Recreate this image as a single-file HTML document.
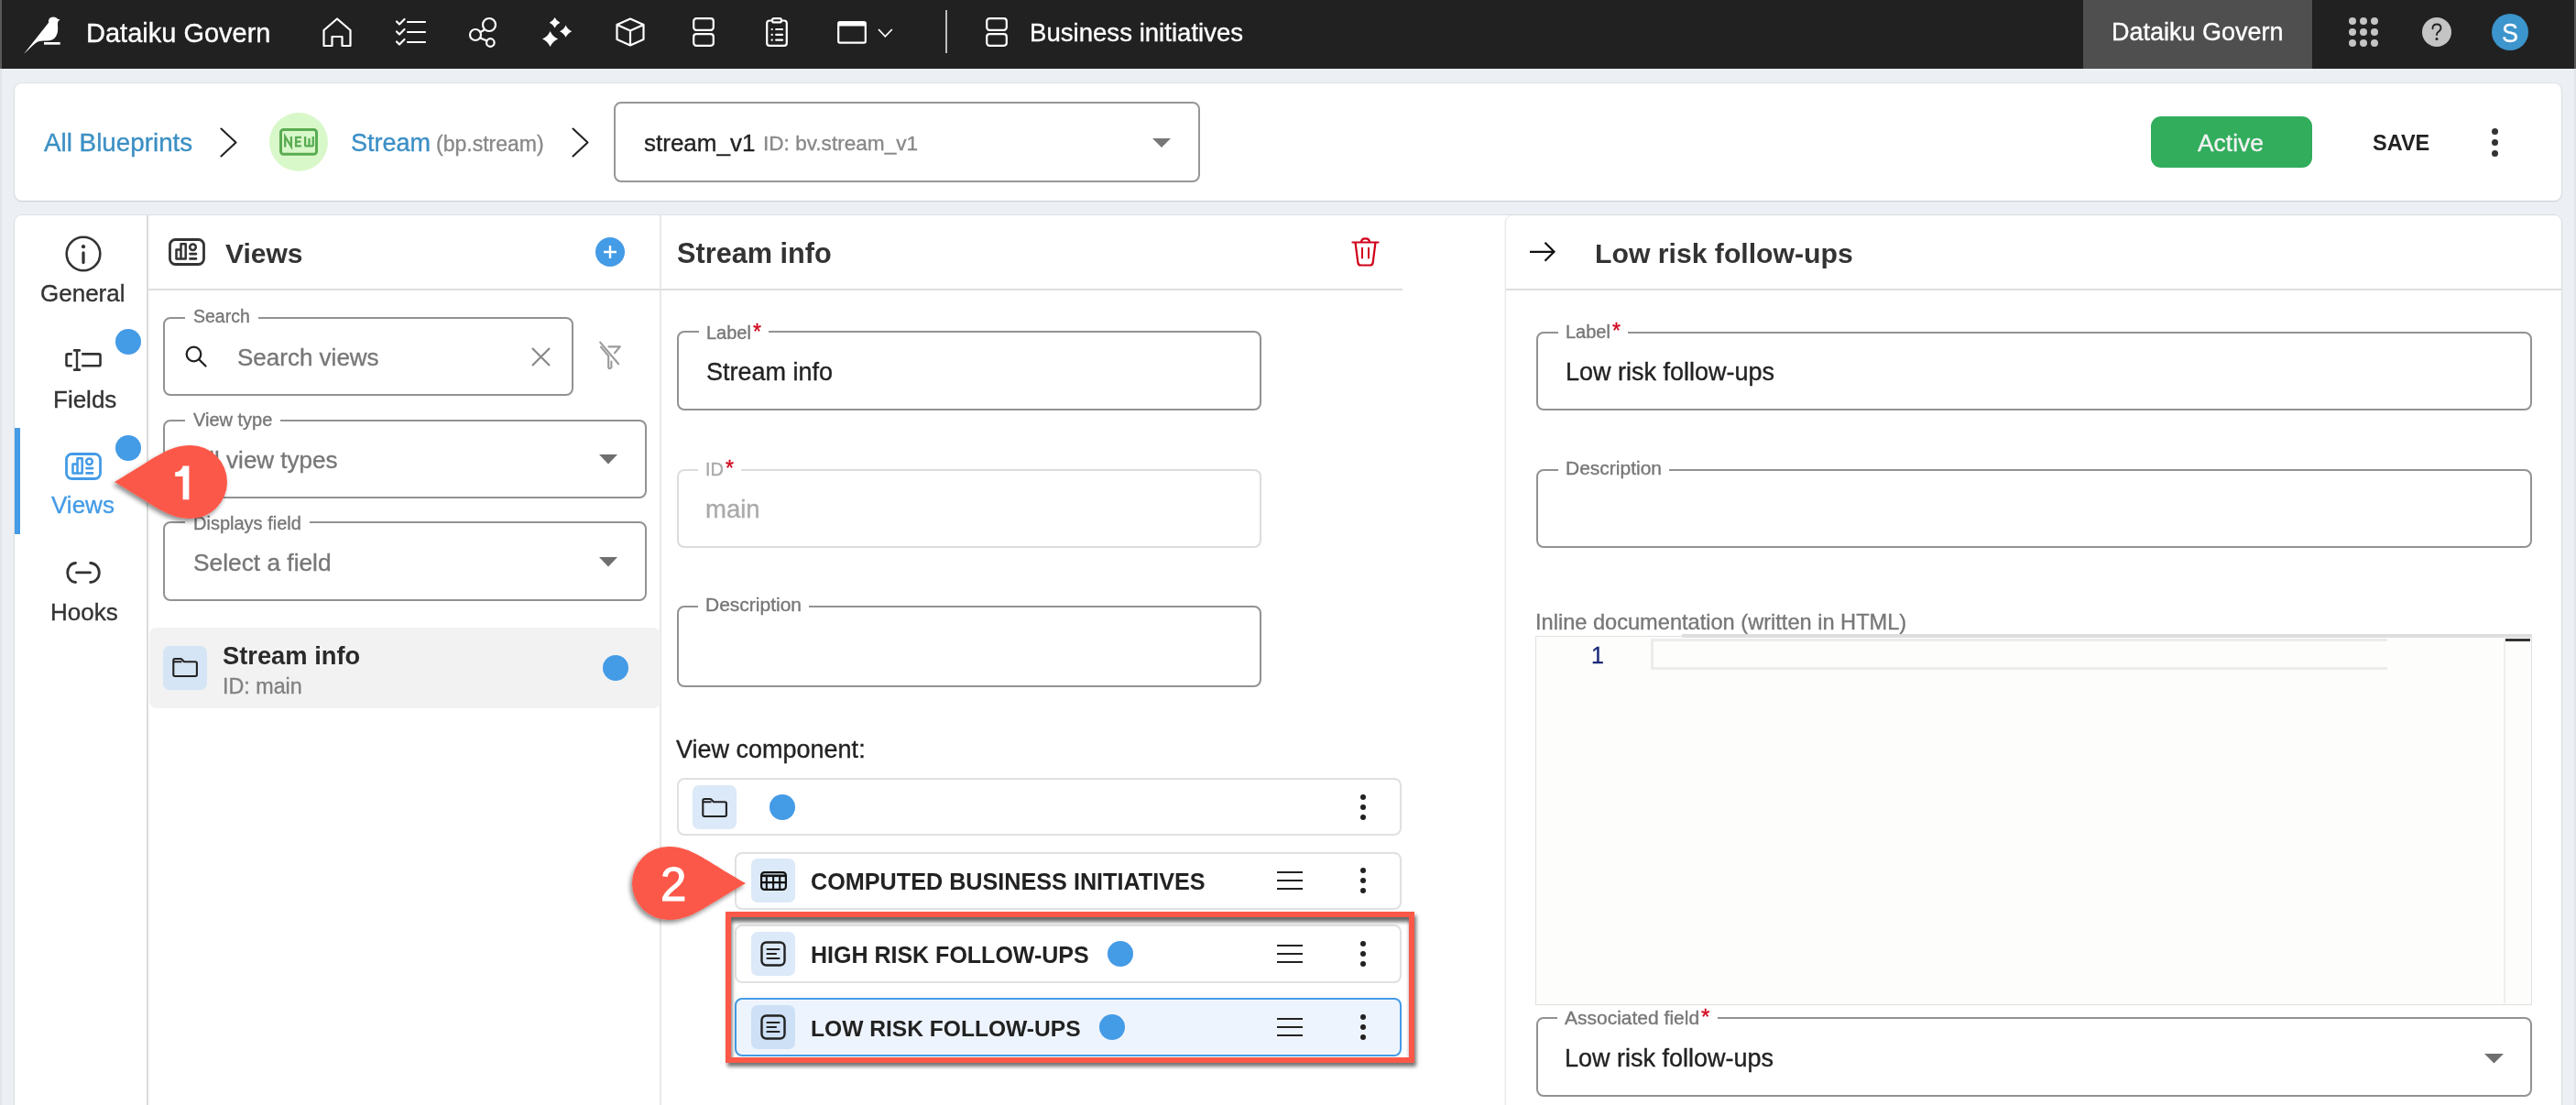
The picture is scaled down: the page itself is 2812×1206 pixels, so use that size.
<!DOCTYPE html>
<html><head><meta charset="utf-8"><style>
*{box-sizing:border-box;margin:0;padding:0}
html,body{width:2812px;height:1206px;overflow:hidden;background:#eceff3;font-family:"Liberation Sans",sans-serif;color:#222}
.a{position:absolute}
svg{position:absolute;overflow:visible}
.t{position:absolute;white-space:nowrap;line-height:1;will-change:transform}
</style></head><body>
<div class="a" style="left:0px;top:0px;width:2812px;height:75px;background:#212121"></div>
<div class="a" style="left:0px;top:0px;width:2px;height:75px;background:#5a5a5a"></div>
<div class="a" style="left:0px;top:75px;width:2px;height:1131px;background:#e3e5e9"></div>
<div class="a" style="left:2810px;top:0px;width:2px;height:75px;background:#5a5a5a"></div>
<div class="a" style="left:2810px;top:75px;width:2px;height:1131px;background:#e3e5e9"></div>
<svg style="left:0px;top:0px" width="120" height="75" viewBox="0 0 120 75"><path fill="#fff" d="M26.1 58.7 L53.2 24.6 C52.3 21.5 54.5 18.6 58.2 18.6 C60.6 18.6 62 19.6 62.9 20.8 L65.4 21.2 L63.2 23.8 C62.6 27.5 63.5 30 63 34 C62.3 39.5 59 43.6 54 44.2 C50 44.5 45 44.2 42 45.2 C37 47.5 30.5 55 26.1 58.7 Z"/><rect x="48" y="46" width="17.7" height="2.7" fill="#fff"/></svg>
<div class="t" style="left:94px;top:21.8px;font-size:29px;color:#fff;font-weight:normal;-webkit-text-stroke:0.35px #fff;">Dataiku Govern</div>
<svg style="left:352px;top:19px" width="32" height="32" viewBox="0 0 32 32"><path stroke="#fff" stroke-width="2.2" fill="none" stroke-linecap="round" stroke-linejoin="round" d="M1.5 31 V14 L16 1.5 L30.5 14 V31 H21.5 V21 H10.5 V31 Z"/></svg>
<svg style="left:432px;top:19px" width="32" height="32" viewBox="0 0 32 32"><path stroke="#fff" stroke-width="2.2" fill="none" stroke-linecap="round" stroke-linejoin="round" d="M1 4.5 L4 7.5 L9.5 2 M1 15.5 L4 18.5 L9.5 13 M1 26.5 L4 29.5 L9.5 24 M13 5 H32 M13 16 H32 M13 27 H32"/></svg>
<svg style="left:512px;top:19px" width="32" height="32" viewBox="0 0 32 32"><circle stroke="#fff" stroke-width="2.2" fill="none" stroke-linecap="round" stroke-linejoin="round" cx="22" cy="8" r="7"/><circle stroke="#fff" stroke-width="2.2" fill="none" stroke-linecap="round" stroke-linejoin="round" cx="7" cy="19" r="6"/><circle stroke="#fff" stroke-width="2.2" fill="none" stroke-linecap="round" stroke-linejoin="round" cx="23.3" cy="27.5" r="4.3"/><path stroke="#fff" stroke-width="2.2" fill="none" stroke-linecap="round" stroke-linejoin="round" d="M12.5 16 L16 14 M12.2 22.5 L19.5 25.5"/></svg>
<svg style="left:592px;top:19px" width="32" height="32" viewBox="0 0 32 32"><path fill="#fff" d="M8.6 14.9 Q11.18 20.92 17.2 23.5 Q11.18 26.08 8.6 32.1 Q6.02 26.08 0.0 23.5 Q6.02 20.92 8.6 14.9 Z M13.6 -0.09999999999999964 Q15.34 3.96 19.4 5.7 Q15.34 7.44 13.6 11.5 Q11.86 7.44 7.8 5.7 Q11.86 3.96 13.6 -0.09999999999999964 Z M25.6 8.6 Q27.580000000000002 13.219999999999999 32.2 15.2 Q27.580000000000002 17.18 25.6 21.799999999999997 Q23.62 17.18 19.0 15.2 Q23.62 13.219999999999999 25.6 8.6 Z"/></svg>
<svg style="left:672px;top:19px" width="32" height="32" viewBox="0 0 32 32"><path stroke="#fff" stroke-width="2.2" fill="none" stroke-linecap="round" stroke-linejoin="round" d="M16 1.5 L30.5 8 V24 L16 30.5 L1.5 24 V8 Z M1.5 8 L16 14.5 L30.5 8 M16 14.5 V30.5"/></svg>
<svg style="left:756px;top:19px" width="24" height="32" viewBox="0 0 24 32"><rect stroke="#fff" stroke-width="2.2" fill="none" stroke-linecap="round" stroke-linejoin="round" x="1.2" y="1.2" width="21.6" height="12.6" rx="3"/><rect stroke="#fff" stroke-width="2.2" fill="none" stroke-linecap="round" stroke-linejoin="round" x="1.2" y="18.2" width="21.6" height="12.6" rx="3"/></svg>
<svg style="left:836px;top:19px" width="24" height="32" viewBox="0 0 24 32"><path stroke="#fff" stroke-width="2.2" fill="none" stroke-linecap="round" stroke-linejoin="round" d="M6.5 3.5 H4 Q1.2 3.5 1.2 6.3 V28 Q1.2 30.8 4 30.8 H20 Q22.8 30.8 22.8 28 V6.3 Q22.8 3.5 20 3.5 H17.5"/><rect stroke="#fff" stroke-width="2.2" fill="none" stroke-linecap="round" stroke-linejoin="round" x="7" y="1.2" width="10" height="4.2" rx="2"/><path stroke="#fff" stroke-width="2.2" stroke-linecap="round" d="M6.6 13 H6.8 M6.6 18.9 H6.8 M6.6 24.7 H6.8 M11.2 13 H18 M11.2 18.9 H18 M11.2 24.7 H18"/></svg>
<svg style="left:914px;top:23px" width="32" height="25" viewBox="0 0 32 25"><rect stroke="#fff" stroke-width="2.2" fill="none" stroke-linecap="round" stroke-linejoin="round" x="1.2" y="1.2" width="29.6" height="22.4" rx="1.5"/><rect x="1" y="1" width="30" height="4.5" fill="#fff"/></svg>
<svg style="left:958px;top:31px" width="17" height="10" viewBox="0 0 17 10"><path stroke="#fff" stroke-width="1.8" fill="none" d="M1 1 L8.3 8.8 L15.8 1"/></svg>
<div class="a" style="left:1032px;top:11px;width:2px;height:47px;background:#bdbdbd"></div>
<svg style="left:1076px;top:19px" width="24" height="32" viewBox="0 0 24 32"><rect stroke="#fff" stroke-width="2.2" fill="none" stroke-linecap="round" stroke-linejoin="round" x="1.2" y="1.2" width="21.6" height="12.6" rx="3"/><rect stroke="#fff" stroke-width="2.2" fill="none" stroke-linecap="round" stroke-linejoin="round" x="1.2" y="18.2" width="21.6" height="12.6" rx="3"/></svg>
<div class="t" style="left:1124px;top:21.6px;font-size:27.6px;color:#fff;font-weight:normal;-webkit-text-stroke:0.35px #fff;">Business initiatives</div>
<div class="a" style="left:2274px;top:0px;width:250px;height:75px;background:#4f4f4f"></div>
<div class="t" style="left:2305px;top:22.2px;font-size:27px;color:#fff;font-weight:normal;-webkit-text-stroke:0.35px #fff;">Dataiku Govern</div>
<svg style="left:2564px;top:19px" width="32" height="32" viewBox="0 0 32 32"><circle cx="4" cy="4" r="4" fill="#c4c4c4"/><circle cx="4" cy="16" r="4" fill="#c4c4c4"/><circle cx="4" cy="28" r="4" fill="#c4c4c4"/><circle cx="16" cy="4" r="4" fill="#c4c4c4"/><circle cx="16" cy="16" r="4" fill="#c4c4c4"/><circle cx="16" cy="28" r="4" fill="#c4c4c4"/><circle cx="28" cy="4" r="4" fill="#c4c4c4"/><circle cx="28" cy="16" r="4" fill="#c4c4c4"/><circle cx="28" cy="28" r="4" fill="#c4c4c4"/></svg>
<svg style="left:2644px;top:19px" width="32" height="32" viewBox="0 0 32 32"><circle cx="16" cy="16" r="16" fill="#c4c4c4"/><path d="M11.5 12.2 Q11.5 7.5 16 7.5 Q20.5 7.5 20.5 11.6 Q20.5 14.2 17.6 15.8 Q16 16.8 16 19" stroke="#222" stroke-width="1.9" fill="none" stroke-linecap="round"/><circle cx="16" cy="23.5" r="1.5" fill="#222"/></svg>
<div class="a" style="left:2720px;top:15px;width:40px;height:40px;background:#3c95cc;border-radius:50%"></div>
<div class="t" style="left:2730.5px;top:21.4px;font-size:30px;color:#fff;font-weight:normal;transform:scaleX(.9);transform-origin:0 0;-webkit-text-stroke:0.3px #fff">S</div>
<div class="a" style="left:16px;top:91px;width:2780px;height:128px;background:#fff;border-radius:8px;box-shadow:0 0 0 1px rgba(0,0,0,.05),0 1px 2px rgba(0,0,0,.10)"></div>
<div class="t" style="left:48px;top:142.1px;font-size:27.8px;color:#3b8fc4;font-weight:normal;-webkit-text-stroke:0.35px #3b8fc4;">All Blueprints</div>
<svg style="left:240px;top:139px" width="19" height="33" viewBox="0 0 19 33"><path stroke="#222" stroke-width="2.1" fill="none" stroke-linecap="round" stroke-linejoin="round" d="M1.5 1.5 L17.5 16.5 L1.5 31.5"/></svg>
<div class="a" style="left:294px;top:123px;width:64px;height:64px;background:#d9f8ca;border-radius:50%"></div>
<svg style="left:305px;top:140px" width="42" height="30" viewBox="0 0 42 30"><rect x="1.5" y="1.5" width="39" height="26.8" rx="3" stroke="#5aac52" stroke-width="3" fill="none"/><path d="M6.2 20.5 V9 L12.9 20 V9 M24 9.9 H18.1 V19.4 H24 M18.1 14.6 H23.5 M28.1 9 V18 Q28.1 19.4 29.5 19.4 H35.4 Q36.8 19.4 36.8 18 V9 M32.5 11 V19.4" stroke="#5aac52" stroke-width="2.3" fill="none"/></svg>
<div class="t" style="left:383px;top:142.7px;font-size:27px;color:#3b8fc6;font-weight:normal;-webkit-text-stroke:0.35px #3b8fc6;">Stream</div>
<div class="t" style="left:476px;top:146.1px;font-size:23px;color:#888;font-weight:normal;-webkit-text-stroke:0.35px #888;">(bp.stream)</div>
<svg style="left:624px;top:139px" width="19" height="33" viewBox="0 0 19 33"><path stroke="#222" stroke-width="2.1" fill="none" stroke-linecap="round" stroke-linejoin="round" d="M1.5 1.5 L17.5 16.5 L1.5 31.5"/></svg>
<div class="a" style="left:670px;top:111px;width:640px;height:88px;border:2px solid #979797;border-radius:8px"></div>
<div class="t" style="left:703px;top:142.7px;font-size:26px;color:#222;font-weight:normal;-webkit-text-stroke:0.35px #222;">stream_v1</div>
<div class="t" style="left:833px;top:145.9px;font-size:22.6px;color:#888;font-weight:normal;-webkit-text-stroke:0.35px #888;">ID: bv.stream_v1</div>
<svg style="left:1258px;top:151px" width="20" height="10" viewBox="0 0 20 10"><path d="M0 0 H20 L10 10 Z" fill="#777"/></svg>
<div class="a" style="left:2348px;top:127px;width:176px;height:56px;background:#31ad5c;border-radius:11px"></div>
<div class="t" style="left:2399px;top:142.7px;font-size:26.4px;color:#f2f2f2;font-weight:normal;-webkit-text-stroke:0.35px #f2f2f2;">Active</div>
<div class="t" style="left:2590px;top:145.1px;font-size:23.5px;color:#222;font-weight:bold;">SAVE</div>
<div class="a" style="left:2720px;top:139.5px;width:7px;height:7px;background:#333;border-radius:50%"></div>
<div class="a" style="left:2720px;top:151.5px;width:7px;height:7px;background:#333;border-radius:50%"></div>
<div class="a" style="left:2720px;top:164.0px;width:7px;height:7px;background:#333;border-radius:50%"></div>
<div class="a" style="left:16px;top:235px;width:2780px;height:1100px;background:#fff;border-radius:8px;box-shadow:0 0 0 1px rgba(0,0,0,.05),0 1px 2px rgba(0,0,0,.10)"></div>
<div class="a" style="left:160px;top:235px;width:2px;height:1000px;background:#dcdcdc"></div>
<svg style="left:71px;top:257px" width="40" height="40" viewBox="0 0 40 40"><circle cx="20" cy="20" r="18.3" stroke="#333" stroke-width="2.6" fill="none"/><circle cx="20" cy="12.2" r="2.1" fill="#333"/><path d="M20 18.8 V29.6" stroke="#333" stroke-width="3.2" stroke-linecap="round"/></svg>
<div class="t" style="left:44.3px;top:306.6px;font-size:26px;color:#333;font-weight:normal;-webkit-text-stroke:0.35px #333;">General</div>
<div class="a" style="left:126px;top:359px;width:28px;height:28px;background:#449be6;border-radius:50%"></div>
<svg style="left:71px;top:381px" width="40" height="24" viewBox="0 0 40 24"><path d="M7.8 5.4 H3 Q1.5 5.4 1.5 6.9 V16.8 Q1.5 18.3 3 18.3 H7.8 M18.2 5.4 H37 Q38.5 5.4 38.5 6.9 V16.8 Q38.5 18.3 37 18.3 H18.2" stroke="#333" stroke-width="2.6" fill="none"/><path d="M13 1.4 V22.7" stroke="#333" stroke-width="2.4"/><path d="M10.2 1.4 H15.8 M10.2 22.7 H15.8" stroke="#333" stroke-width="2.8" stroke-linecap="round"/></svg>
<div class="t" style="left:57.5px;top:422.6px;font-size:26px;color:#333;font-weight:normal;-webkit-text-stroke:0.35px #333;">Fields</div>
<div class="a" style="left:16px;top:467px;width:6px;height:116px;background:#449be6"></div>
<div class="a" style="left:126px;top:475px;width:28px;height:28px;background:#449be6;border-radius:50%"></div>
<svg style="left:71px;top:494px" width="40" height="30" viewBox="0 0 40 30"><rect x="1.5" y="1.5" width="37" height="27" rx="6" stroke="#449be6" stroke-width="2.8" fill="none"/><path d="M8.5 22.5 V12.5 H13.5 V6.3 H18.7 V22.5 Z M13.5 12.5 V22.5" stroke="#449be6" stroke-width="2.5" fill="none" stroke-linejoin="round"/><circle cx="26.5" cy="9.7" r="3.3" stroke="#449be6" stroke-width="2.5" fill="none"/><path d="M23.5 17.1 H30 M23.5 22.4 H30" stroke="#449be6" stroke-width="2.7" stroke-linecap="round"/></svg>
<div class="t" style="left:56px;top:538.3px;font-size:26px;color:#449be6;font-weight:normal;-webkit-text-stroke:0.35px #449be6;">Views</div>
<svg style="left:71px;top:612px" width="40" height="26" viewBox="0 0 40 26"><path d="M11.5 2.5 A 8.8 10.5 0 0 0 11.5 23.5 M27.7 2.5 A 9.6 10.5 0 0 1 27.7 23.5 M12.5 12.9 H27.5" stroke="#333" stroke-width="2.8" fill="none" stroke-linecap="round"/></svg>
<div class="t" style="left:54.5px;top:654.7px;font-size:26px;color:#333;font-weight:normal;-webkit-text-stroke:0.35px #333;">Hooks</div>
<div class="a" style="left:720px;top:235px;width:2px;height:1000px;background:#e8e8e8"></div>
<div class="a" style="left:162px;top:315px;width:559px;height:2px;background:#dedede"></div>
<svg style="left:184px;top:260px" width="40" height="30" viewBox="0 0 40 30"><rect x="1.5" y="1.5" width="37" height="27" rx="6" stroke="#333" stroke-width="2.8" fill="none"/><path d="M8.5 22.5 V12.5 H13.5 V6.3 H18.7 V22.5 Z M13.5 12.5 V22.5" stroke="#333" stroke-width="2.5" fill="none" stroke-linejoin="round"/><circle cx="26.5" cy="9.7" r="3.3" stroke="#333" stroke-width="2.5" fill="none"/><path d="M23.5 17.1 H30 M23.5 22.4 H30" stroke="#333" stroke-width="2.7" stroke-linecap="round"/></svg>
<div class="t" style="left:246.3px;top:261.6px;font-size:30px;color:#333;font-weight:bold;">Views</div>
<svg style="left:650px;top:259px" width="32" height="32" viewBox="0 0 32 32"><circle cx="16" cy="16" r="16" fill="#449be6"/><path d="M16 9 V23 M9 16 H23" stroke="#fff" stroke-width="2.4"/></svg>
<div class="a" style="left:178px;top:346px;width:448px;height:86px;border:2px solid #929292;border-radius:8px"></div>
<div class="t" style="left:210.5px;top:336.3px;font-size:19.5px;color:#777;font-weight:normal;-webkit-text-stroke:0.35px #777;background:#fff;padding:0 9px;margin-left:-9px">Search</div>
<svg style="left:202px;top:377px" width="24" height="24" viewBox="0 0 24 24"><circle cx="9.5" cy="9.5" r="7.8" stroke="#222" stroke-width="2.3" fill="none"/><path d="M15.2 15.2 L22.5 22.5" stroke="#222" stroke-width="2.3" stroke-linecap="round"/></svg>
<div class="t" style="left:259px;top:377.3px;font-size:26px;color:#777;font-weight:normal;-webkit-text-stroke:0.35px #777;">Search views</div>
<svg style="left:580px;top:379px" width="21" height="21" viewBox="0 0 21 21"><path d="M1 1 L20 20 M20 1 L1 20" stroke="#888" stroke-width="2.2"/></svg>
<svg style="left:653px;top:372px" width="26" height="32" viewBox="0 0 26 32"><path d="M3 6.6 L11.2 16.5 V28.6 Q11.2 31 13.6 29.6 L14.4 29 V22.5 M11.5 6.4 H23.8 L18 13.2 M2.2 1.6 L22.2 25.3" stroke="#9a9a9a" stroke-width="2.1" fill="none" stroke-linejoin="round" stroke-linecap="round"/></svg>
<div class="a" style="left:178px;top:458px;width:528px;height:86px;border:2px solid #929292;border-radius:8px"></div>
<div class="t" style="left:210.8px;top:448.3px;font-size:20px;color:#777;font-weight:normal;-webkit-text-stroke:0.35px #777;background:#fff;padding:0 9px;margin-left:-9px">View type</div>
<div class="t" style="left:210.8px;top:489.4px;font-size:26px;color:#777;font-weight:normal;-webkit-text-stroke:0.35px #777;">All view types</div>
<svg style="left:654px;top:496px" width="20" height="11" viewBox="0 0 20 11"><path d="M0 0 H20 L10 10.5 Z" fill="#6f6f6f"/></svg>
<div class="a" style="left:178px;top:569px;width:528px;height:87px;border:2px solid #929292;border-radius:8px"></div>
<div class="t" style="left:210.8px;top:560.7px;font-size:20px;color:#777;font-weight:normal;-webkit-text-stroke:0.35px #777;background:#fff;padding:0 9px;margin-left:-9px">Displays field</div>
<div class="t" style="left:210.8px;top:600.7px;font-size:26.3px;color:#777;font-weight:normal;-webkit-text-stroke:0.35px #777;">Select a field</div>
<svg style="left:654px;top:608px" width="20" height="11" viewBox="0 0 20 11"><path d="M0 0 H20 L10 10.5 Z" fill="#6f6f6f"/></svg>
<div class="a" style="left:163px;top:685px;width:558px;height:88px;background:#f2f2f2;border-radius:8px"></div>
<div class="a" style="left:178px;top:705px;width:48px;height:48px;background:#d6e5f5;border-radius:7px"></div>
<svg style="left:188px;top:715px" width="28" height="26" viewBox="0 0 28 26"><path d="M1.3 7 V21.3 Q1.3 23 3 23 H25.2 Q26.9 23 26.9 21.3 V9 Q26.9 7.3 25.2 7.3 H13 L10.8 4.9 Q10.1 4 9 4 H3 Q1.3 4 1.3 5.7 Z M1.3 7.3 H10.5" stroke="#222" stroke-width="2.1" fill="none" stroke-linejoin="round"/></svg>
<div class="t" style="left:242.5px;top:701.6px;font-size:27.3px;color:#2a2a2a;font-weight:bold;">Stream info</div>
<div class="t" style="left:242.5px;top:738.3px;font-size:23.3px;color:#808080;font-weight:normal;-webkit-text-stroke:0.35px #808080;">ID: main</div>
<div class="a" style="left:658px;top:715px;width:28px;height:28px;background:#449be6;border-radius:50%"></div>
<div class="a" style="left:722px;top:315px;width:809px;height:2px;background:#dedede"></div>
<div class="t" style="left:738.6px;top:261.7px;font-size:30.7px;color:#333;font-weight:bold;">Stream info</div>
<svg style="left:1475px;top:259px" width="31" height="32" viewBox="0 0 31 32"><path d="M1.5 5.5 H29.5 M11 5.5 Q11 1.3 15.5 1.3 Q20 1.3 20 5.5 M4.5 5.5 L7.3 27.5 Q7.7 30.5 10.5 30.5 H20.5 Q23.3 30.5 23.7 27.5 L26.5 5.5 M1.5 5.5 H29.5" stroke="#d0021b" stroke-width="2.2" fill="none" stroke-linejoin="round" stroke-linecap="round"/><path d="M12 11.8 V22.6 M19 11.8 V22.6" stroke="#d0021b" stroke-width="2" stroke-linecap="round"/></svg>
<div class="a" style="left:739px;top:361px;width:638px;height:87px;border:2px solid #929292;border-radius:8px"></div>
<div class="t" style="left:770.5px;top:350.5px;font-size:20px;color:#777;font-weight:normal;-webkit-text-stroke:0.35px #777;background:#fff;padding:0 8px;margin-left:-8px">Label<span style="color:#d0021b;-webkit-text-stroke:0.3px #d0021b;font-size:1.15em;padding-left:2px">*</span></div>
<div class="t" style="left:770.5px;top:392.9px;font-size:27px;color:#222;font-weight:normal;-webkit-text-stroke:0.35px #222;">Stream info</div>
<div class="a" style="left:739px;top:512px;width:638px;height:86px;border:2px solid #dcdcdc;border-radius:8px"></div>
<div class="t" style="left:770px;top:500.3px;font-size:20px;color:#aaa;font-weight:normal;-webkit-text-stroke:0.35px #aaa;background:#fff;padding:0 8px;margin-left:-8px">ID<span style="color:#d0021b;-webkit-text-stroke:0.3px #d0021b;font-size:1.15em;padding-left:2px">*</span></div>
<div class="t" style="left:770px;top:541.7px;font-size:27.5px;color:#aaa;font-weight:normal;-webkit-text-stroke:0.35px #aaa;">main</div>
<div class="a" style="left:739px;top:661px;width:638px;height:89px;border:2px solid #929292;border-radius:8px"></div>
<div class="t" style="left:770px;top:648.8px;font-size:21px;color:#777;font-weight:normal;-webkit-text-stroke:0.35px #777;background:#fff;padding:0 8px;margin-left:-8px">Description</div>
<div class="t" style="left:738px;top:804.6px;font-size:27px;color:#222;font-weight:normal;-webkit-text-stroke:0.35px #222;">View component:</div>
<div class="a" style="left:739px;top:849px;width:791px;height:63px;border:2px solid #e0e0e0;border-radius:8px"></div>
<div class="a" style="left:756px;top:857px;width:48px;height:48px;background:#dbe9f8;border-radius:7px"></div>
<svg style="left:766px;top:868px" width="28" height="26" viewBox="0 0 28 26"><path d="M1.3 7 V21.3 Q1.3 23 3 23 H25.2 Q26.9 23 26.9 21.3 V9 Q26.9 7.3 25.2 7.3 H13 L10.8 4.9 Q10.1 4 9 4 H3 Q1.3 4 1.3 5.7 Z M1.3 7.3 H10.5" stroke="#222" stroke-width="2.1" fill="none" stroke-linejoin="round"/></svg>
<div class="a" style="left:840px;top:867px;width:28px;height:28px;background:#449be6;border-radius:50%"></div>
<div class="a" style="left:1485px;top:867px;width:6px;height:6px;background:#222;border-radius:50%"></div>
<div class="a" style="left:1485px;top:878px;width:6px;height:6px;background:#222;border-radius:50%"></div>
<div class="a" style="left:1485px;top:889px;width:6px;height:6px;background:#222;border-radius:50%"></div>
<div class="a" style="left:802px;top:930px;width:728px;height:63px;border:2px solid #e0e0e0;border-radius:8px"></div>
<div class="a" style="left:820px;top:937px;width:48px;height:48px;background:#dbe9f8;border-radius:7px"></div>
<svg style="left:829px;top:950px" width="31" height="23" viewBox="0 0 31 23"><rect x="2.1" y="2.1" width="26.8" height="18.8" rx="3.5" stroke="#111" stroke-width="2.2" fill="none"/><path d="M2 5.8 H29" stroke="#111" stroke-width="2.6"/><path d="M2 13.1 H29 M7.8 6 V21 M15.1 6 V21 M22.2 6 V21" stroke="#111" stroke-width="2.1"/></svg>
<div class="t" style="left:885px;top:949.6px;font-size:25.2px;color:#222;font-weight:bold;">COMPUTED BUSINESS INITIATIVES</div>
<svg style="left:1394px;top:951px" width="28" height="20" viewBox="0 0 28 20"><path d="M0 1 H28 M0 10 H28 M0 19 H28" stroke="#222" stroke-width="2.2"/></svg>
<div class="a" style="left:1485px;top:947px;width:6px;height:6px;background:#222;border-radius:50%"></div>
<div class="a" style="left:1485px;top:958px;width:6px;height:6px;background:#222;border-radius:50%"></div>
<div class="a" style="left:1485px;top:969px;width:6px;height:6px;background:#222;border-radius:50%"></div>
<div class="a" style="left:802px;top:1009px;width:728px;height:64px;border:2px solid #e0e0e0;border-radius:8px"></div>
<div class="a" style="left:820px;top:1017px;width:48px;height:48px;background:#dbe9f8;border-radius:7px"></div>
<svg style="left:830px;top:1027px" width="28" height="28" viewBox="0 0 28 28"><rect x="1.5" y="1.5" width="25" height="25" rx="5" stroke="#222" stroke-width="2.4" fill="none"/><path d="M7.5 9 H20.5 M7.5 14 H17 M7.5 19 H20.5" stroke="#222" stroke-width="2.2" stroke-linecap="round"/></svg>
<div class="t" style="left:885px;top:1030.0px;font-size:25px;color:#222;font-weight:bold;">HIGH RISK FOLLOW-UPS</div>
<div class="a" style="left:1209px;top:1027px;width:28px;height:28px;background:#449be6;border-radius:50%"></div>
<svg style="left:1394px;top:1031px" width="28" height="20" viewBox="0 0 28 20"><path d="M0 1 H28 M0 10 H28 M0 19 H28" stroke="#222" stroke-width="2.2"/></svg>
<div class="a" style="left:1485px;top:1027px;width:6px;height:6px;background:#222;border-radius:50%"></div>
<div class="a" style="left:1485px;top:1038px;width:6px;height:6px;background:#222;border-radius:50%"></div>
<div class="a" style="left:1485px;top:1049px;width:6px;height:6px;background:#222;border-radius:50%"></div>
<div class="a" style="left:802px;top:1089px;width:728px;height:64px;border:2px solid #449be6;border-radius:8px;background:#eef4fd"></div>
<div class="a" style="left:820px;top:1097px;width:48px;height:48px;background:#cde0f5;border-radius:7px"></div>
<svg style="left:830px;top:1107px" width="28" height="28" viewBox="0 0 28 28"><rect x="1.5" y="1.5" width="25" height="25" rx="5" stroke="#222" stroke-width="2.4" fill="none"/><path d="M7.5 9 H20.5 M7.5 14 H17 M7.5 19 H20.5" stroke="#222" stroke-width="2.2" stroke-linecap="round"/></svg>
<div class="t" style="left:885px;top:1110.5px;font-size:24.6px;color:#222;font-weight:bold;">LOW RISK FOLLOW-UPS</div>
<div class="a" style="left:1200px;top:1107px;width:28px;height:28px;background:#449be6;border-radius:50%"></div>
<svg style="left:1394px;top:1111px" width="28" height="20" viewBox="0 0 28 20"><path d="M0 1 H28 M0 10 H28 M0 19 H28" stroke="#222" stroke-width="2.2"/></svg>
<div class="a" style="left:1485px;top:1107px;width:6px;height:6px;background:#222;border-radius:50%"></div>
<div class="a" style="left:1485px;top:1118px;width:6px;height:6px;background:#222;border-radius:50%"></div>
<div class="a" style="left:1485px;top:1129px;width:6px;height:6px;background:#222;border-radius:50%"></div>
<div class="a" style="left:792px;top:995px;width:752px;height:165px;border:6px solid #fc5848;box-shadow:2px 4px 4px rgba(0,0,0,.55), inset 1px 5px 4px rgba(0,0,0,.6)"></div>
<div class="a" style="left:1644px;top:235px;width:1152px;height:1000px;background:#fff;border-radius:8px 8px 0 0;box-shadow:-1px 0 2px rgba(0,0,0,.12)"></div>
<div class="a" style="left:1644px;top:315px;width:1152px;height:2px;background:#dedede"></div>
<svg style="left:1669px;top:264px" width="30" height="23" viewBox="0 0 30 23"><path d="M1 10.8 H28 M17.5 0.8 L27.5 10.8 L17.5 20.8" stroke="#111" stroke-width="2.2" fill="none"/></svg>
<div class="t" style="left:1740.7px;top:261.7px;font-size:30.2px;color:#333;font-weight:bold;">Low risk follow-ups</div>
<div class="a" style="left:1677px;top:362px;width:1087px;height:86px;border:2px solid #929292;border-radius:8px"></div>
<div class="t" style="left:1708.6px;top:350.3px;font-size:20px;color:#777;font-weight:normal;-webkit-text-stroke:0.35px #777;background:#fff;padding:0 8px;margin-left:-8px">Label<span style="color:#d0021b;-webkit-text-stroke:0.3px #d0021b;font-size:1.15em;padding-left:2px">*</span></div>
<div class="t" style="left:1708.6px;top:392.7px;font-size:27px;color:#222;font-weight:normal;-webkit-text-stroke:0.35px #222;">Low risk follow-ups</div>
<div class="a" style="left:1677px;top:512px;width:1087px;height:86px;border:2px solid #929292;border-radius:8px"></div>
<div class="t" style="left:1708.6px;top:500.3px;font-size:21px;color:#777;font-weight:normal;-webkit-text-stroke:0.35px #777;background:#fff;padding:0 8px;margin-left:-8px">Description</div>
<div class="t" style="left:1676px;top:667.6px;font-size:23.6px;color:#777;font-weight:normal;-webkit-text-stroke:0.35px #777;">Inline documentation (written in HTML)</div>
<div class="a" style="left:1676px;top:694px;width:1088px;height:403px;border:1.7px solid #e0e0e0;background:#fdfdfb"></div>
<div class="a" style="left:1836px;top:692px;width:928px;height:4px;background:#dedede"></div>
<div class="a" style="left:1802px;top:697px;width:804px;height:34px;border:3px solid #ececec;border-right:none"></div>
<div class="a" style="left:2733px;top:695px;width:2px;height:400px;background:#eeeeee"></div>
<div class="a" style="left:2735px;top:697px;width:27px;height:3px;background:#333"></div>
<div class="t" style="left:1737px;top:702.7px;font-size:25px;color:#1a2a7a;font-weight:normal;-webkit-text-stroke:0.35px #1a2a7a;font-family:"Liberation Mono",monospace;">1</div>
<div class="a" style="left:1677px;top:1110px;width:1087px;height:87px;border:2px solid #929292;border-radius:8px"></div>
<div class="t" style="left:1708px;top:1098.2px;font-size:21px;color:#777;font-weight:normal;-webkit-text-stroke:0.35px #777;background:#fff;padding:0 8px;margin-left:-8px">Associated field<span style="color:#d0021b;-webkit-text-stroke:0.3px #d0021b;font-size:1.15em;padding-left:2px">*</span></div>
<div class="t" style="left:1708px;top:1141.7px;font-size:27px;color:#222;font-weight:normal;-webkit-text-stroke:0.35px #222;">Low risk follow-ups</div>
<svg style="left:2712px;top:1150px" width="21" height="10" viewBox="0 0 21 10"><path d="M0 0 H21 L10.5 10.5 Z" fill="#6f6f6f"/></svg>
<svg style="left:0;top:0" width="2812" height="1206"><defs><filter id="sh1" x="-50%" y="-50%" width="200%" height="200%"><feDropShadow dx="-2" dy="3" stdDeviation="2.5" flood-color="#000" flood-opacity="0.45"/></filter></defs><path d="M125 526 C 168 501 183 486 208 486 A 40 40 0 0 1 208 566 C 183 566 168 551 125 526 Z" fill="#fc5848" filter="url(#sh1)"/></svg>
<svg style="left:0px;top:0px" width="2812" height="1206" viewBox="0 0 2812 1206"><path d="M199.6 508.4 H206.4 V545.2 H199.6 V520 H191.2 V515.2 Q198.4 514.6 199.6 508.4 Z" fill="#fff"/></svg>
<svg style="left:0;top:0" width="2812" height="1206"><defs><filter id="sh2" x="-50%" y="-50%" width="200%" height="200%"><feDropShadow dx="-2" dy="3" stdDeviation="2.5" flood-color="#000" flood-opacity="0.45"/></filter></defs><path d="M814 964 C 770 939 755 924 730 924 A 40 40 0 0 0 730 1004 C 755 1004 770 989 814 964 Z" fill="#fc5848" filter="url(#sh2)"/></svg>
<div class="t" style="left:721px;top:939.8px;font-size:51px;color:#fff;font-weight:normal;-webkit-text-stroke:1px #fff">2</div>
</body></html>
